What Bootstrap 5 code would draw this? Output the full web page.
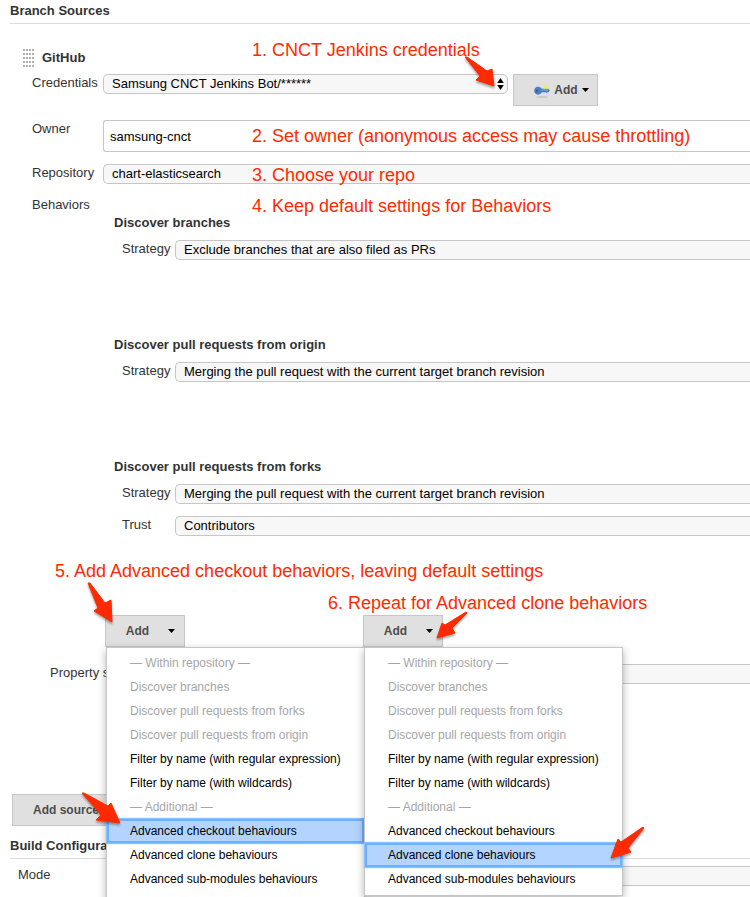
<!DOCTYPE html>
<html lang="en">
<head>
<meta charset="utf-8">
<meta name="viewport" content="width=device-width, initial-scale=1">
<title>Branch Sources</title>
<link href="https://cdn.jsdelivr.net/npm/bootstrap@5.3.0/dist/css/bootstrap.min.css" rel="stylesheet">
<style>
body { font: 13px/18px "Liberation Sans", Arial, sans-serif; color: #333; background: #fff; }
.config-page { height: 100vh; }
.section-title { font-size: 13px; line-height: 18px; font-weight: 700; margin: 0 0 0 10px; padding: 2px 0 3px; border-bottom: 1px solid #ddd; }
.source-name { font-size: 13px; line-height: 18px; font-weight: 700; margin: 0; }
.source-head { margin: 25px 0 7px 23px; gap: 7px; }
.grip { width: 12px; height: 18px; background: radial-gradient(circle at 1px 1px, #b0b0b0 1px, transparent 1px) 0 0 / 3px 4px; }
.field { display: flex; align-items: flex-start; padding-left: 32px; margin-bottom: 12px; }
.field-label { flex: 0 0 71px; white-space: nowrap; }
.field-cred { margin-bottom: 14px; }
.pick { appearance: none; flex: 1 1 0; min-width: 0; height: 20px; padding: 0 8px; font-size: 13px; line-height: 18px; color: #000; background: #f7f7f7; border: 1px solid #c6c6c6; border-right: 0; border-radius: 5px 0 0 5px; }
.pick-cred { flex: 0 0 405px; border-right: 1px solid #c6c6c6; border-radius: 5px; }
.pick-arrows { right: 4px; top: 4px; pointer-events: none; }
.owner-box { flex: 1 1 0; min-width: 0; height: 32px; padding: 0 6px; font-size: 13px; color: #000; border: 1px solid #c6c6c6; border-right: 0; border-radius: 3px 0 0 3px; }
.push { height: 32px; padding: 0; font-size: 12px; line-height: 18px; font-weight: 700; color: #4d4d4d; background: #e0e0e0; border: 1px solid #c6c6c6; border-radius: 0; }
.push-cred { width: 85px; margin-left: 5px; padding-left: 12px; gap: 4px; }
.push-menu { width: 80px; padding-left: 11px; gap: 19px; }
.push-source { width: 108px; margin: 0 0 9px 12px; }
.behavior { margin-left: 114px; min-height: 122px; }
.behavior-last { min-height: 0; margin-bottom: 79px; }
.behavior h3 { font-size: 13px; line-height: 18px; font-weight: 700; margin: 0 0 8px; }
.behavior .field { padding-left: 8px; }
.behavior .field-label { flex-basis: 53px; }
.behavior-last .field:last-child { margin-bottom: 0; }
.add-row { margin: 0 0 17px 105px; gap: 178px; }
.behavior-menu { top: 32px; left: 1px; width: 259px; padding: 3px 0 4px; background: #fff; border: 1px solid #c6c6c6; box-shadow: 0 3px 8px rgba(0,0,0,.3); z-index: 2; }
.menu-tall { padding-bottom: 12px; }
.menu-entry { display: block; width: 100%; height: 24px; padding: 0 23px; border: 0; background: none; text-align: left; font-size: 12px; line-height: 24px; color: #000; white-space: nowrap; }
.menu-entry:disabled { color: #a6a6a6; }
.menu-entry.chosen { background: #b3d4ff; box-shadow: inset 0 0 0 2px #6eb0ff, 0 0 1px 1px #8cc0ff; }
.field-property { padding-left: 50px; margin-bottom: 110px; }
.field-property .field-label { flex-basis: 110px; }
.field-mode { padding-left: 18px; margin-top: 7px; }
.field-mode .field-label { flex-basis: 100px; }
.notes { z-index: 3; pointer-events: none; }
.note { position: absolute; font-size: 18px; line-height: 22px; color: #ff2a00; white-space: nowrap; }
.n1 { left: 252px; top: 39px; }
.n2 { left: 252px; top: 125px; }
.n3 { left: 252px; top: 164px; }
.n4 { left: 252px; top: 195px; }
.n5 { left: 55px; top: 560px; }
.n6 { left: 328px; top: 592px; }
.arrows { filter: drop-shadow(0 2px 1px rgba(0,0,0,.35)); }
</style>
<script src="https://cdn.jsdelivr.net/npm/bootstrap@5.3.0/dist/js/bootstrap.bundle.min.js"></script>
</head>
<body>
<main class="config-page position-relative overflow-hidden">
  <h2 class="section-title">Branch Sources</h2>
  <div class="source-head d-flex align-items-center">
    <span class="grip"></span>
    <h3 class="source-name">GitHub</h3>
  </div>

  <div class="field field-cred">
    <label class="field-label" for="cred">Credentials</label>
    <div class="position-relative d-flex">
      <select class="pick pick-cred" id="cred"><option>Samsung CNCT Jenkins Bot/******</option></select>
      <svg class="pick-arrows position-absolute" width="7" height="12" viewBox="0 0 7 12"><path d="M3.500 0 6.800 5H.2zM3.500 12 .2 7h6.600z" fill="#000"/></svg>
    </div>
    <button type="button" class="push push-cred d-flex align-items-center justify-content-center">
      <svg width="16" height="16" viewBox="0 0 16 16"><ellipse cx="8" cy="15" rx="6" ry="1" fill="#c8c8c8"/><path d="M4 5C6 5 7 6 7.500 7h7l.8 1.400-.8 1.600h-1l-.8.8-.9-.8H7.500C7 11.300 6 12.300 4 12.300 2 12.300.5 10.700.5 8.700S2 5 4 5z" fill="#4c7fc0" stroke="#3768a8" stroke-width=".5"/><path d="M7.500 8h6.800" stroke="#9dbde4" stroke-width=".8"/><circle cx="2.800" cy="8.700" r=".9" fill="#254f8c"/><path d="M11.800 1.800l.9 1.700 1.900.2-1.300 1.400.4 1.900-1.900-.8-1.900.8.4-1.900L9 3.700l1.900-.2z" fill="#f3ec55"/></svg>
      Add
      <svg width="7" height="4" viewBox="0 0 7 4"><path d="M0 0h7L3.500 4z" fill="#000"/></svg>
    </button>
  </div>

  <div class="field">
    <label class="field-label" for="owner">Owner</label>
    <input class="owner-box" id="owner" type="text" value="samsung-cnct">
  </div>
  <div class="field">
    <label class="field-label" for="repo">Repository</label>
    <select class="pick" id="repo"><option>chart-elasticsearch</option></select>
  </div>
  <div class="field mb-0">Behaviors</div>

  <section class="behavior">
    <h3>Discover branches</h3>
    <div class="field">
      <label class="field-label" for="s1">Strategy</label>
      <select class="pick" id="s1"><option>Exclude branches that are also filed as PRs</option></select>
    </div>
  </section>
  <section class="behavior">
    <h3>Discover pull requests from origin</h3>
    <div class="field">
      <label class="field-label" for="s2">Strategy</label>
      <select class="pick" id="s2"><option>Merging the pull request with the current target branch revision</option></select>
    </div>
  </section>
  <section class="behavior behavior-last">
    <h3>Discover pull requests from forks</h3>
    <div class="field">
      <label class="field-label" for="s3">Strategy</label>
      <select class="pick" id="s3"><option>Merging the pull request with the current target branch revision</option></select>
    </div>
    <div class="field">
      <label class="field-label" for="trust">Trust</label>
      <select class="pick" id="trust"><option>Contributors</option></select>
    </div>
  </section>

  <div class="add-row d-flex">
    <div class="position-relative">
      <button type="button" class="push push-menu d-flex align-items-center justify-content-center">Add
        <svg width="7" height="4" viewBox="0 0 7 4"><path d="M0 0h7L3.500 4z" fill="#000"/></svg></button>
      <div class="behavior-menu menu-tall position-absolute">
        <button type="button" class="menu-entry" disabled>— Within repository —</button>
        <button type="button" class="menu-entry" disabled>Discover branches</button>
        <button type="button" class="menu-entry" disabled>Discover pull requests from forks</button>
        <button type="button" class="menu-entry" disabled>Discover pull requests from origin</button>
        <button type="button" class="menu-entry">Filter by name (with regular expression)</button>
        <button type="button" class="menu-entry">Filter by name (with wildcards)</button>
        <button type="button" class="menu-entry" disabled>— Additional —</button>
        <button type="button" class="menu-entry chosen">Advanced checkout behaviours</button>
        <button type="button" class="menu-entry">Advanced clone behaviours</button>
        <button type="button" class="menu-entry">Advanced sub-modules behaviours</button>
      </div>
    </div>
    <div class="position-relative">
      <button type="button" class="push push-menu d-flex align-items-center justify-content-center">Add
        <svg width="7" height="4" viewBox="0 0 7 4"><path d="M0 0h7L3.500 4z" fill="#000"/></svg></button>
      <div class="behavior-menu position-absolute">
        <button type="button" class="menu-entry" disabled>— Within repository —</button>
        <button type="button" class="menu-entry" disabled>Discover branches</button>
        <button type="button" class="menu-entry" disabled>Discover pull requests from forks</button>
        <button type="button" class="menu-entry" disabled>Discover pull requests from origin</button>
        <button type="button" class="menu-entry">Filter by name (with regular expression)</button>
        <button type="button" class="menu-entry">Filter by name (with wildcards)</button>
        <button type="button" class="menu-entry" disabled>— Additional —</button>
        <button type="button" class="menu-entry">Advanced checkout behaviours</button>
        <button type="button" class="menu-entry chosen">Advanced clone behaviours</button>
        <button type="button" class="menu-entry">Advanced sub-modules behaviours</button>
      </div>
    </div>
  </div>

  <div class="field field-property">
    <label class="field-label" for="prop">Property strategy</label>
    <select class="pick" id="prop"></select>
  </div>
  <button type="button" class="push push-source d-flex align-items-center justify-content-center">Add source</button>
  <h2 class="section-title">Build Configuration</h2>
  <div class="field field-mode">
    <label class="field-label" for="mode">Mode</label>
    <select class="pick" id="mode"></select>
  </div>

  <div class="notes position-absolute top-0 start-0">
    <span class="note n1">1. CNCT Jenkins credentials</span>
    <span class="note n2">2. Set owner (anonymous access may cause throttling)</span>
    <span class="note n3">3. Choose your repo</span>
    <span class="note n4">4. Keep default settings for Behaviors</span>
    <span class="note n5">5. Add Advanced checkout behaviors, leaving default settings</span>
    <span class="note n6">6. Repeat for Advanced clone behaviors</span>
    <svg class="arrows d-block" width="750" height="897" viewBox="0 0 750 897" fill="#ff2a00" stroke="#ff2a00" stroke-linejoin="round">
      <path d="M465 57 467 57 487 71 492 69 494 86 476 80 480 76z"/>
      <path d="M88 583 90 583 105 603 111 600 112 622 94 611 98 608z"/>
      <path d="M466 612 467 613 452 628 455 633 437 638 442 623 445 625z"/>
      <path d="M82 793 84 793 108 806 111 803 120 823 96 820 101 815z"/>
      <path d="M643 827 644 828 628 848 631 852 611 858 618 839 621 842z"/>
    </svg>
  </div>
</main>
</body>
</html>
